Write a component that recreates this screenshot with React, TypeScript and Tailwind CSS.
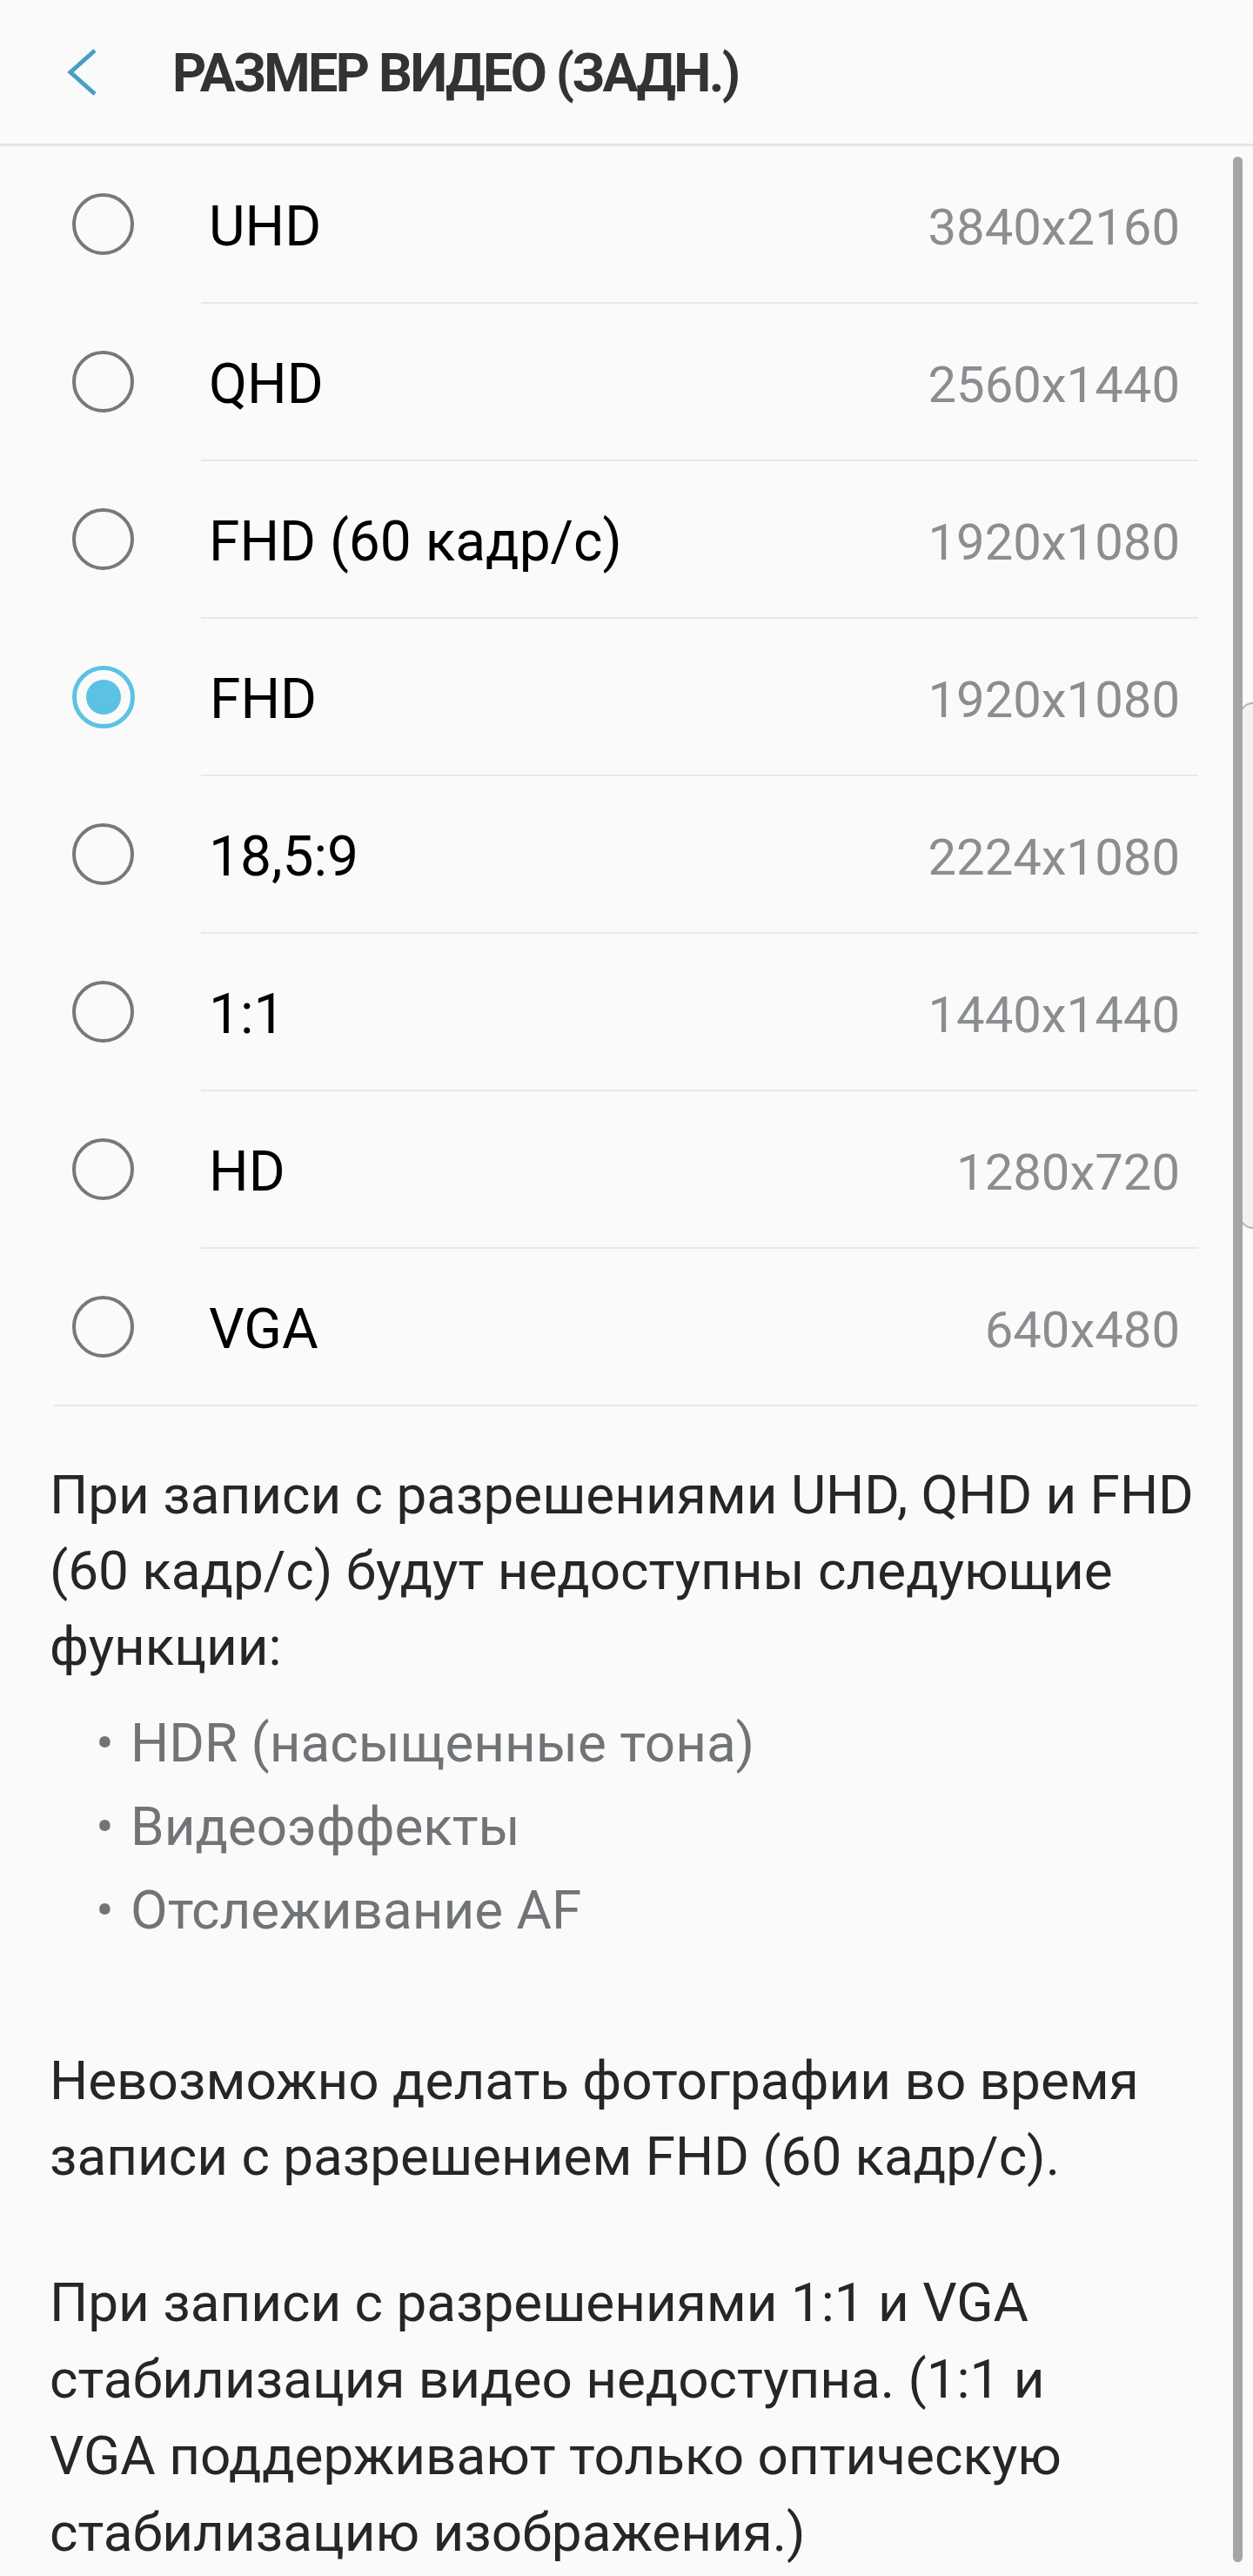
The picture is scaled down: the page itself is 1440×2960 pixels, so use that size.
import React from "react";

const rows = [
  { label: "UHD", value: "3840x2160" },
  { label: "QHD", value: "2560x1440" },
  { label: "FHD (60 кадр/с)", value: "1920x1080" },
  { label: "FHD", value: "1920x1080", selected: true },
  { label: "18,5:9", value: "2224x1080" },
  { label: "1:1", value: "1440x1440" },
  { label: "HD", value: "1280x720" },
  { label: "VGA", value: "640x480" },
];

function Radio({ selected }: { selected?: boolean }) {
  if (selected) {
    return (
      <div className="w-[72px] h-[72px] rounded-full border-[5px] border-[#5bc2e4] flex items-center justify-center shrink-0">
        <div className="w-[40px] h-[40px] rounded-full bg-[#5bc2e4]" />
      </div>
    );
  }
  return <div className="w-[71px] h-[71px] rounded-full border-[4.5px] border-[#787878] shrink-0" />;
}

export default function App() {
  return (
    <div
      className="relative w-[1440px] h-[2960px] bg-[#fafafa] overflow-hidden"
      style={{ fontFamily: "Roboto, 'Noto Sans', sans-serif" }}
    >
      {/* Header */}
      <div className="h-[165px] flex items-center border-b-[3px] border-[#e6e6e6] box-content">
        <svg className="ml-[76px] shrink-0" width="40" height="60" viewBox="0 0 40 60">
          <polyline points="33,18 5,43 33,68" transform="translate(0,-13)" fill="none" stroke="#479fc2" strokeWidth="5" />
        </svg>
        <div className="ml-[82px] text-[61px] font-bold text-[#333333] tracking-[-2.6px] leading-none pt-[4px]">
          РАЗМЕР ВИДЕО (ЗАДН.)
        </div>
      </div>

      {/* List */}
      <div>
        {rows.map((r, i) => (
          <div key={i}>
            <div className="h-[179px] flex items-center pl-[83px] pr-[84px]">
              <Radio selected={r.selected} />
              <div className="ml-[86px] text-[64px] text-black leading-none flex-1 pt-[6px]">{r.label}</div>
              <div className="text-[58px] text-[#8b8e91] leading-none pt-[6px]">{r.value}</div>
            </div>
            <div
              className={
                i === rows.length - 1
                  ? "h-[2px] bg-[#e8e8e8] ml-[62px] mr-[63px]"
                  : "h-[2px] bg-[#e8e8e8] ml-[231px] mr-[63px]"
              }
            />
          </div>
        ))}
      </div>

      {/* Notes */}
      <div className="pl-[57px] pr-[40px] pt-[58px] text-[62px] leading-[87px] text-[#262626] whitespace-nowrap">
        <p>
          <span className="block">При записи с разрешениями UHD, QHD и FHD</span>
          <span className="block">(60 кадр/с) будут недоступны следующие</span>
          <span className="block">функции:</span>
        </p>
        <ul className="mt-[20px] text-[#717477] leading-[96px]">
          <li className="flex">
            <span className="ml-[53px] w-[40px]">•</span>
            <span>HDR (насыщенные тона)</span>
          </li>
          <li className="flex">
            <span className="ml-[53px] w-[40px]">•</span>
            <span>Видеоэффекты</span>
          </li>
          <li className="flex">
            <span className="ml-[53px] w-[40px]">•</span>
            <span>Отслеживание AF</span>
          </li>
        </ul>
        <p className="mt-[104px]">
          <span className="block">Невозможно делать фотографии во время</span>
          <span className="block">записи с разрешением FHD (60 кадр/с).</span>
        </p>
        <p className="mt-[81px] leading-[88px]">
          <span className="block">При записи с разрешениями 1:1 и VGA</span>
          <span className="block">стабилизация видео недоступна. (1:1 и</span>
          <span className="block">VGA поддерживают только оптическую</span>
          <span className="block">стабилизацию изображения.)</span>
        </p>
      </div>

      {/* Edge panel handle */}
      <div className="absolute right-0 top-[807px] h-[605px] w-[16px] rounded-l-[18px] border-[2px] border-r-0 border-[#b3b3b3] bg-[#f2f2f2]" />

      {/* Scrollbar */}
      <div className="absolute left-[1417px] top-[180px] w-[11px] h-[2764px] rounded-full bg-[#a3a5a7]" />
    </div>
  );
}
